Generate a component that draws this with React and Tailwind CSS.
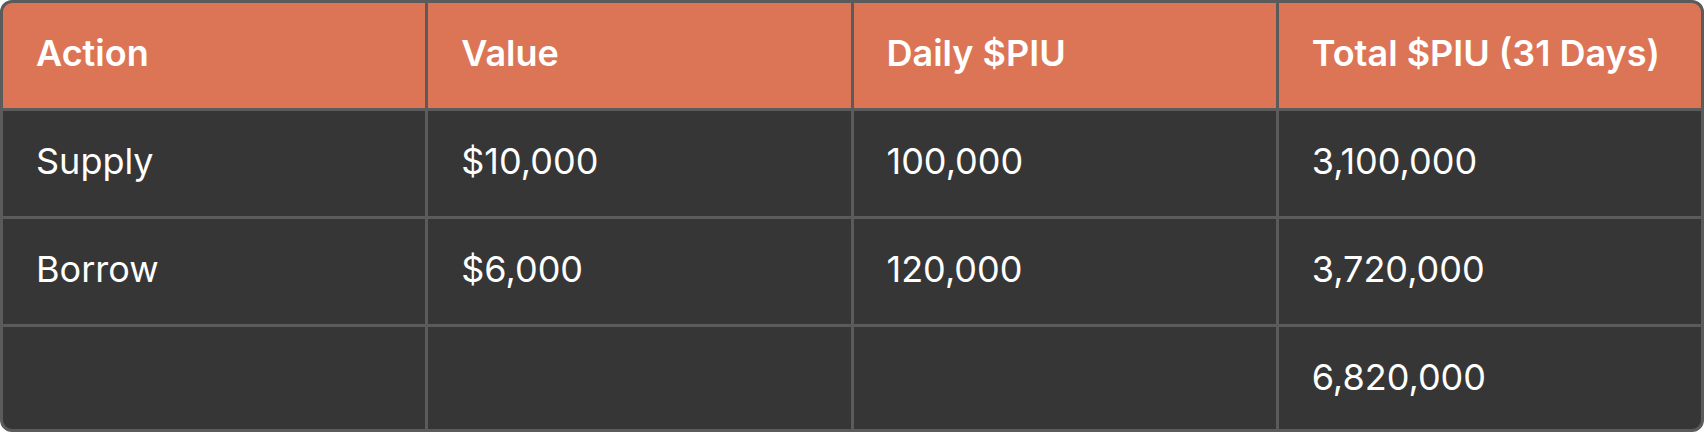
import React from 'react';

const headers = ['Action', 'Value', 'Daily $PIU', 'Total $PIU (31 Days)'];

const rows = [
  ['Supply', '$10,000', '100,000', '3,100,000'],
  ['Borrow', '$6,000', '120,000', '3,720,000'],
  ['', '', '', '6,820,000'],
];

const App = () => {
  return (
    <div className="w-[1704px] h-[432px] bg-white" style={{ fontFamily: 'Inter, "Noto Sans", sans-serif' }}>
      <div className="h-full border-[3px] border-[#5b5b5b] rounded-[12px] overflow-hidden bg-[#5b5b5b]">
        <div className="grid grid-cols-4 grid-rows-[105px_105px_105px_102px] gap-[3px] h-full">
          {/* Header */}
          {headers.map((h) => (
            <div key={h} className="bg-[#dc7556] text-white text-[36px] font-semibold leading-[44px] pt-[28px] px-[33px]">
              {h}
            </div>
          ))}

          {/* Body */}
          {rows.map((row, i) =>
            row.map((cell, j) => (
              <div key={`${i}-${j}`} className="bg-[#363636] text-white text-[36px] font-normal leading-[44px] pt-[28px] px-[33px]">
                {cell}
              </div>
            ))
          )}
        </div>
      </div>
    </div>
  );
};

export default App;
